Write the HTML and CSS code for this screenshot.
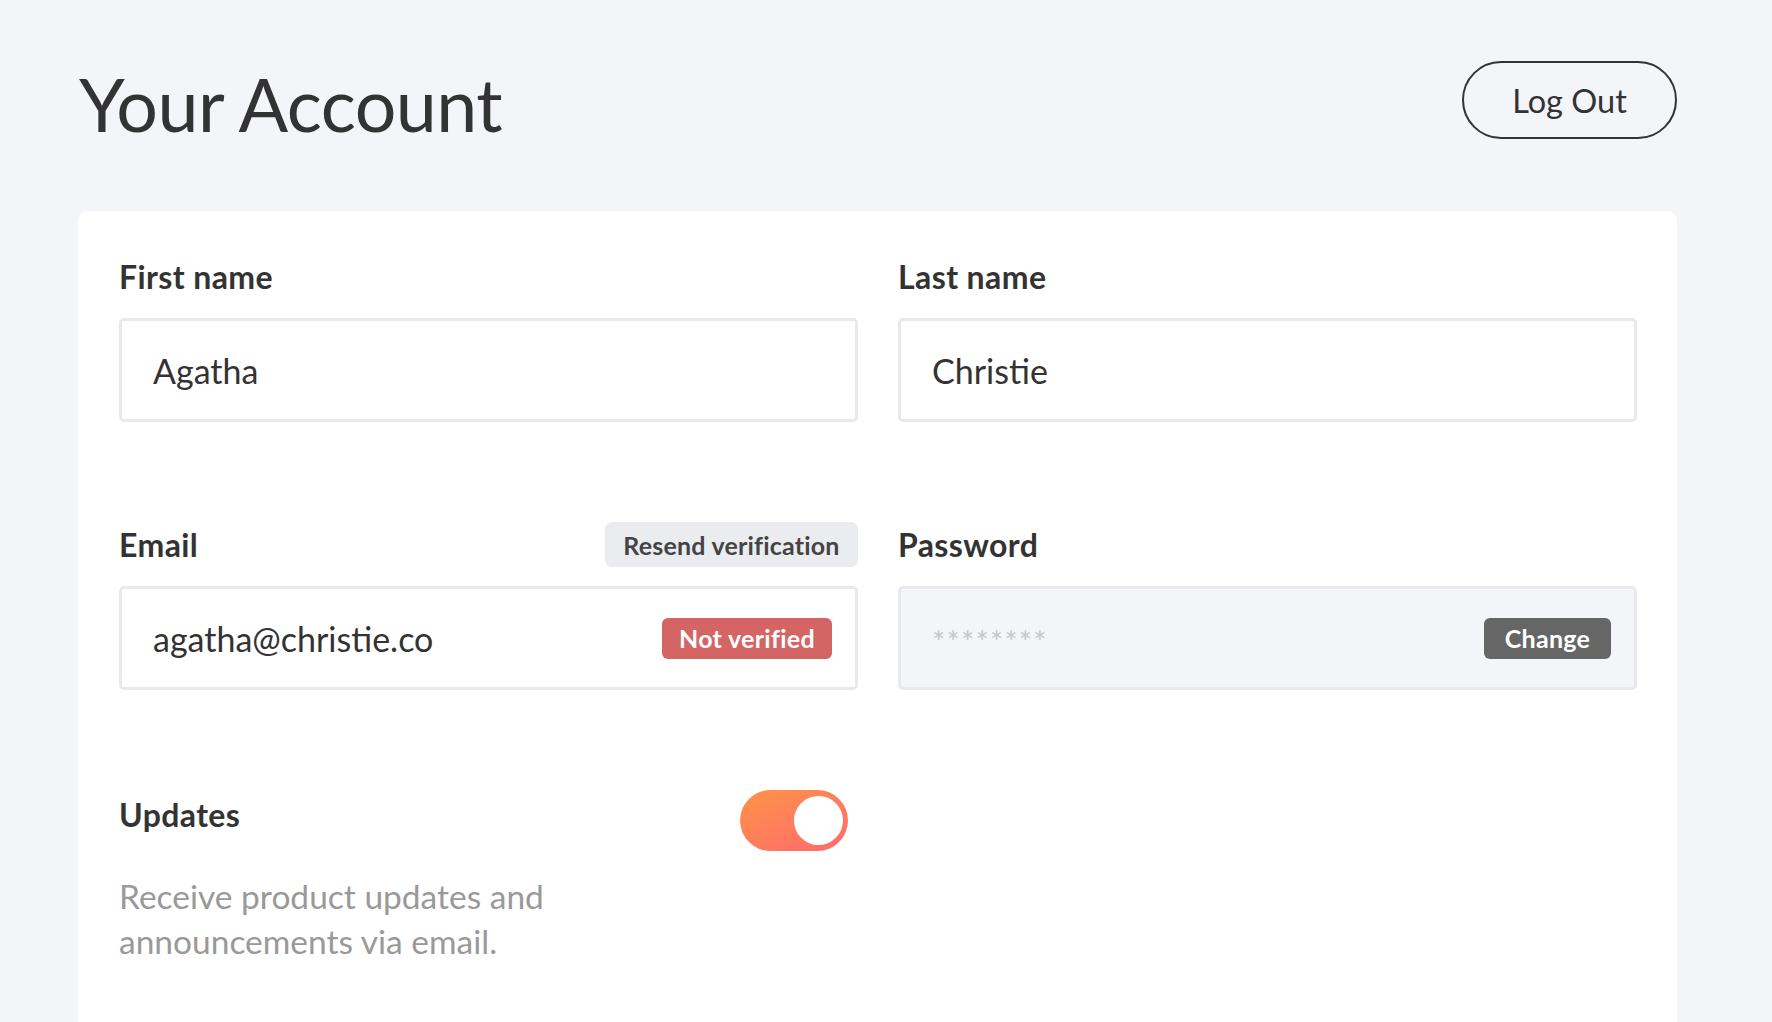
FILE: index.html
```html
<!DOCTYPE html>
<html lang="en">
<head>
<meta charset="utf-8">
<title>Your Account</title>
<link rel="stylesheet" href="styles.css">
</head>
<body>
<div class="page">
  <header class="header">
    <h1 class="title">Your Account</h1>
    <button class="logout">Log Out</button>
  </header>
  <main class="card">
    <div class="grid">
      <div class="field">
        <div class="label-row"><span class="label">First name</span></div>
        <div class="input"><span class="value">Agatha</span></div>
      </div>
      <div class="field">
        <div class="label-row"><span class="label">Last name</span></div>
        <div class="input"><span class="value">Christie</span></div>
      </div>
      <div class="field">
        <div class="label-row"><span class="label">Email</span><button class="resend">Resend verification</button></div>
        <div class="input"><span class="value">agatha@christie.co</span><span class="badge badge-red">Not verified</span></div>
      </div>
      <div class="field">
        <div class="label-row"><span class="label">Password</span></div>
        <div class="input input-muted"><span class="stars">********</span><span class="badge badge-grey">Change</span></div>
      </div>
      <div class="field updates">
        <div class="updates-row">
          <span class="label label-updates">Updates</span>
          <span class="toggle"><span class="knob"></span></span>
        </div>
        <p class="desc">Receive product updates and<br>announcements via email.</p>
      </div>
    </div>
  </main>
</div>
</body>
</html>
```
FILE: styles.css
```css
* { box-sizing: border-box; }
html, body { margin: 0; padding: 0; }
body {
  background: #f4f5f9;
  font-family: "Lato", "Noto Sans", sans-serif;
  color: #333333;
  height: 1022px;
  overflow: hidden;
}
.page {
  padding: 61px 95px 0 78px;
}
.header {
  display: flex;
  justify-content: space-between;
  align-items: flex-start;
  height: 78px;
}
.title {
  margin: 0 0 0 1px;
  padding-top: 8px;
  font-size: 73.5px;
  font-weight: 400;
  line-height: 70px;
  color: #333333;
  letter-spacing: -0.5px;
}
.logout {
  width: 215px;
  height: 78px;
  border: 2px solid #333333;
  border-radius: 39px;
  background: transparent;
  font-family: inherit;
  font-size: 32.5px;
  color: #333333;
  padding: 0;
}
.card {
  margin-top: 72px;
  background: #ffffff;
  border-radius: 10px 10px 0 0;
  padding: 43px 40px 0 41px;
  height: 811px;
}
.grid {
  display: grid;
  grid-template-columns: 1fr 1fr;
  column-gap: 40px;
  row-gap: 100px;
}
.label-row {
  display: flex;
  justify-content: space-between;
  align-items: center;
  height: 45px;
  margin-bottom: 19px;
}
.label {
  font-size: 32px;
  font-weight: 700;
  color: #333333;
  letter-spacing: 0.4px;
}
.resend {
  height: 45px;
  width: 253px;
  border: none;
  border-radius: 7px;
  background: #ebecf0;
  color: #444444;
  font-family: inherit;
  font-size: 25px;
  font-weight: 700;
  padding: 0;
  letter-spacing: 0.2px;
}
.input {
  height: 104px;
  border: 3px solid #e8e9ee;
  border-radius: 5px;
  background: #ffffff;
  display: flex;
  align-items: center;
  justify-content: space-between;
  padding: 0 23px 0 31px;
}
.input-muted {
  background: #f4f5f9;
}
.value {
  font-size: 34px;
  color: #333333;
}
.stars {
  font-size: 31px;
  color: #c6c6cb;
  letter-spacing: 1.3px;
  margin-top: 6px;
}
.badge {
  height: 41px;
  border-radius: 6px;
  color: #ffffff;
  font-size: 25px;
  font-weight: 700;
  display: flex;
  align-items: center;
  justify-content: center;
  letter-spacing: 0.3px;
}
.badge-red {
  background: #d56464;
  width: 170px;
}
.badge-grey {
  background: #666666;
  width: 127px;
}
.updates-row {
  display: flex;
  justify-content: space-between;
  align-items: flex-start;
  height: 61px;
  padding-right: 10px;
}
.label-updates {
  margin-top: 5px;
}
.toggle {
  width: 108px;
  height: 61px;
  border-radius: 31px;
  background: linear-gradient(155deg, #fd9448 0%, #ff6a6d 100%);
  display: flex;
  align-items: center;
  justify-content: flex-end;
  padding-right: 5px;
}
.knob {
  width: 49px;
  height: 49px;
  border-radius: 50%;
  background: #ffffff;
}
.desc {
  margin: 23px 0 0;
  font-size: 33.5px;
  line-height: 45px;
  color: #999999;
}
```
